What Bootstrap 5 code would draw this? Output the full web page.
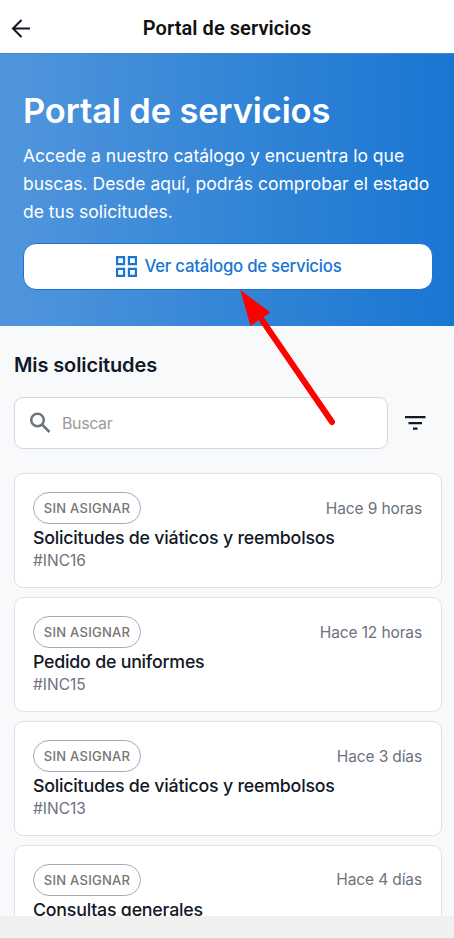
<!DOCTYPE html>
<html lang="es">
<head>
<meta charset="utf-8">
<meta name="viewport" content="width=device-width, initial-scale=1">
<title>Portal de servicios</title>
<link href="https://cdn.jsdelivr.net/npm/bootstrap@5.3.0/dist/css/bootstrap.min.css" rel="stylesheet">
<style>
html, body { height: 938px; overflow: hidden; }
body { font-family: Inter, "Liberation Sans", sans-serif; background: #f8f9fb; color: #111827; }
.app { height: 938px; }
.topbar { height: 53px; padding: 3px 11px 0; background: #fff; }
.topbar h1 { font: 600 20px/24px Roboto, sans-serif; color: #111; letter-spacing: .07px; }
.side { width: 20px; }
.hero { height: 273px; padding: 37px 21px 0 23px; border-top: 1px solid #4385cb; background: linear-gradient(90deg, #5196dc 0%, #1976d2 100%); color: #fff; }
.hero h2 { font-size: 34.5px; line-height: 40px; font-weight: 600; letter-spacing: -.13px; }
.hero p { font-size: 17.5px; line-height: 28px; margin: 11px 0 17px; white-space: nowrap; }
.btn-catalog { height: 47px; border: 1px solid #1976d2; border-radius: 13px; background: #fff; color: #1976d2; font-size: 16.8px; font-weight: 500; letter-spacing: -.25px; gap: 8px; padding-left: 1px !important; }
.requests { padding: 27px 12px 0 14px; }
.requests h3 { font-size: 20px; line-height: 24px; font-weight: 600; letter-spacing: -.12px; margin: 0 0 20px; }
.search { width: 374px; height: 52px; border: 1px solid #d3d6da; border-radius: 9px; background: #fff; color: #9a9a9a; padding-left: 14px; font-size: 16px; letter-spacing: -.4px; gap: 11px; }
.tickets { padding-top: .4px; }
.ticket { height: 114.5px; border: 1px solid #dfe2e6; border-radius: 9px; padding: 18px 19px 0 18px; margin-bottom: 9.4px; color: #111827; }
.status { height: 32px; width: 108px; border: 1px solid #a9acb4; border-radius: 16px; color: #757575; font-size: 13px; font-weight: 500; letter-spacing: .25px; padding-top: 1px; }
.ago { font-size: 15.5px; letter-spacing: -.12px; color: #6b7280; }
.subject { font-size: 17.8px; line-height: 24px; font-weight: 500; letter-spacing: -.22px; margin: 1.6px 0 0; white-space: nowrap; }
.code { font-size: 15.5px; line-height: 22px; color: #6b7280; }
.bottombar { height: 22px; background: #f0f0f0; }
.pointer { left: 0; top: 0; pointer-events: none; }
</style>
<script src="https://cdn.jsdelivr.net/npm/bootstrap@5.3.0/dist/js/bootstrap.bundle.min.js"></script>
</head>
<body>
<div class="app d-flex flex-column position-relative overflow-hidden">
  <header class="topbar d-flex align-items-center justify-content-between flex-shrink-0">
    <svg class="side" width="20" height="20" viewBox="0 0 20 20" fill="none" stroke="#111827" stroke-width="2.1"><path d="M19 10.5H2.500M10.500 2 2 10.500l8.500 8.500"/></svg>
    <h1 class="m-0">Portal de servicios</h1>
    <span class="side"></span>
  </header>
  <section class="hero flex-shrink-0">
    <h2 class="m-0">Portal de servicios</h2>
    <p>Accede a nuestro catálogo y encuentra lo que<br>buscas. Desde aquí, podrás comprobar el estado<br>de tus solicitudes.</p>
    <button type="button" class="btn btn-catalog w-100 p-0 d-flex align-items-center justify-content-center">
      <svg width="21" height="21" viewBox="0 0 21 21" fill="none" stroke="#1976d2" stroke-width="2.2"><path d="M1.100 1.100h7v7h-7zM12.900 1.100h7v7h-7zM1.100 12.900h7v7h-7zM12.900 12.900h7v7h-7z"/></svg>
      <span>Ver catálogo de servicios</span>
    </button>
  </section>
  <main class="requests flex-grow-1 overflow-hidden">
    <h3>Mis solicitudes</h3>
    <div class="d-flex align-items-center mb-4">
      <div class="search d-flex align-items-center">
        <svg width="22" height="22" viewBox="0 0 22 22" fill="none" stroke="#6b7280" stroke-width="2.5"><circle cx="8.5" cy="8" r="6.3"/><path d="m13 12.500 7.500 7.500"/></svg>
        <span>Buscar</span>
      </div>
      <svg class="ms-3" width="22" height="16" viewBox="0 0 22 16" fill="#111827"><path d="M1 1h20.500v2.300H1zM4.500 7h13.500v2.200h-13.500zM9 12.500h4.500v2.200H9z"/></svg>
    </div>
    <div class="tickets">
      <article class="ticket card">
        <div class="d-flex align-items-center justify-content-between"><span class="status d-flex align-items-center justify-content-center">SIN ASIGNAR</span><span class="ago">Hace 9 horas</span></div>
        <h4 class="subject">Solicitudes de viáticos y reembolsos</h4><span class="code">#INC16</span>
      </article>
      <article class="ticket card">
        <div class="d-flex align-items-center justify-content-between"><span class="status d-flex align-items-center justify-content-center">SIN ASIGNAR</span><span class="ago">Hace 12 horas</span></div>
        <h4 class="subject">Pedido de uniformes</h4><span class="code">#INC15</span>
      </article>
      <article class="ticket card">
        <div class="d-flex align-items-center justify-content-between"><span class="status d-flex align-items-center justify-content-center">SIN ASIGNAR</span><span class="ago">Hace 3 días</span></div>
        <h4 class="subject">Solicitudes de viáticos y reembolsos</h4><span class="code">#INC13</span>
      </article>
      <article class="ticket card">
        <div class="d-flex align-items-center justify-content-between"><span class="status d-flex align-items-center justify-content-center">SIN ASIGNAR</span><span class="ago">Hace 4 días</span></div>
        <h4 class="subject">Consultas generales</h4>
      </article>
    </div>
  </main>
  <footer class="bottombar flex-shrink-0"></footer>
  <svg class="pointer position-absolute" width="454" height="938" viewBox="0 0 454 938"><path d="M262 320 332 422" stroke="#f00" stroke-width="6" stroke-linecap="round"/><path d="M240.300 290 270.300 312.500 260.500 319 250.500 326z" fill="#f00"/></svg>
</div>
</body>
</html>
